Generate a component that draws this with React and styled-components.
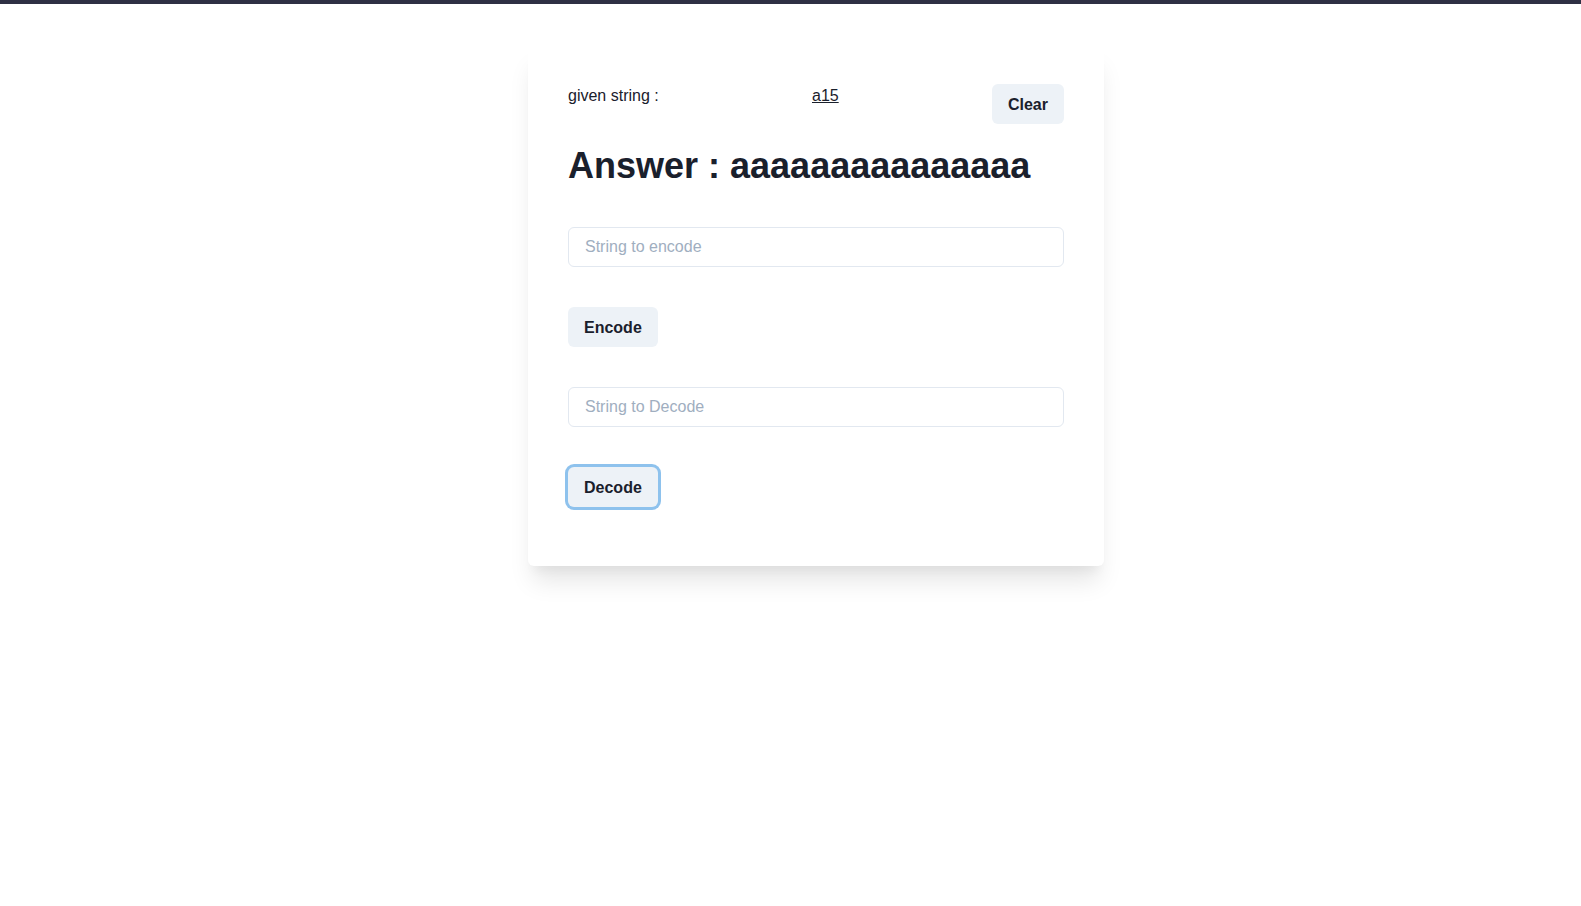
import { useState } from "react";
import styled, { createGlobalStyle } from "styled-components";

const GlobalStyle = createGlobalStyle`
  html, body {
    margin: 0;
    padding: 0;
    background: #ffffff;
    font-family: "Liberation Sans", Arial, sans-serif;
    color: #1a202c;
  }
  * {
    box-sizing: border-box;
  }
`;

const encode = (str) => {
  let out = "";
  let i = 0;
  while (i < str.length) {
    let j = i;
    while (j < str.length && str[j] === str[i]) j++;
    out += str[i] + (j - i);
    i = j;
  }
  return out;
};

const decode = (str) => {
  let out = "";
  const re = /(\D)(\d+)/g;
  let m;
  while ((m = re.exec(str))) out += m[1].repeat(Number(m[2]));
  return out;
};

const App = () => {
  const [given, setGiven] = useState("a15");
  const [answer, setAnswer] = useState(decode("a15"));
  const [toEncode, setToEncode] = useState("");
  const [toDecode, setToDecode] = useState("");

  return (
    <>
      <GlobalStyle />
      <TopBar />
      <Page>
        <Card>
          <Header>
            <Label>given string :</Label>
            <Given>{given}</Given>
            <Button
              onClick={() => {
                setGiven("");
                setAnswer("");
              }}
            >
              Clear
            </Button>
          </Header>
          <Answer>Answer : {answer}</Answer>
          <Form>
            <Input
              placeholder="String to encode"
              value={toEncode}
              onChange={(e) => setToEncode(e.target.value)}
            />
            <Row>
              <Button
                onClick={() => {
                  setGiven(toEncode);
                  setAnswer(encode(toEncode));
                }}
              >
                Encode
              </Button>
            </Row>
            <Input
              placeholder="String to Decode"
              value={toDecode}
              onChange={(e) => setToDecode(e.target.value)}
            />
            <Row>
              <Button
                focused
                onClick={() => {
                  setGiven(toDecode);
                  setAnswer(decode(toDecode));
                }}
              >
                Decode
              </Button>
            </Row>
          </Form>
        </Card>
      </Page>
    </>
  );
};

const TopBar = styled.div`
  height: 4px;
  background: #2e3044;
`;

const Page = styled.main`
  display: flex;
  justify-content: center;
  align-items: flex-start;
  min-height: calc(100vh - 4px);
  padding: 40px 0 80px 51px;
`;

const Card = styled.section`
  width: 576px;
  padding: 40px 40px 59px;
  background: #ffffff;
  border-radius: 6px;
  box-shadow: 0 20px 25px -5px rgba(0, 0, 0, 0.1),
    0 10px 10px -5px rgba(0, 0, 0, 0.04);
`;

const Header = styled.div`
  display: flex;
  justify-content: space-between;
  align-items: flex-start;
`;

const Label = styled.span`
  font-size: 16px;
  line-height: 24px;
`;

const Given = styled.a`
  font-size: 16px;
  line-height: 24px;
  color: #1a202c;
  text-decoration: underline;
  cursor: pointer;
`;

const Answer = styled.h2`
  margin: 20px 0 0;
  font-size: 36px;
  line-height: 1.2;
  font-weight: 700;
  color: #1a202c;
`;

const Form = styled.div`
  display: flex;
  flex-direction: column;
  gap: 40px;
  margin-top: 40px;
`;

const Row = styled.div`
  display: flex;
`;

const Input = styled.input`
  width: 100%;
  height: 40px;
  padding: 0 16px;
  font-family: "Liberation Sans", Arial, sans-serif;
  font-size: 16px;
  color: #1a202c;
  background: #ffffff;
  border: 1px solid #e2e8f0;
  border-radius: 6px;
  outline: none;

  &::placeholder {
    color: #a0aec0;
  }
`;

const Button = styled.button`
  height: 40px;
  padding: 2px 16px 0;
  font-family: "Liberation Sans", Arial, sans-serif;
  font-size: 16px;
  font-weight: 700;
  color: #1a202c;
  background: #edf2f7;
  border: none;
  border-radius: 6px;
  cursor: pointer;
  outline: none;
  box-shadow: ${({ focused }) =>
    focused ? "0 0 0 3px rgba(66, 153, 225, 0.6)" : "none"};
`;

export default App;
